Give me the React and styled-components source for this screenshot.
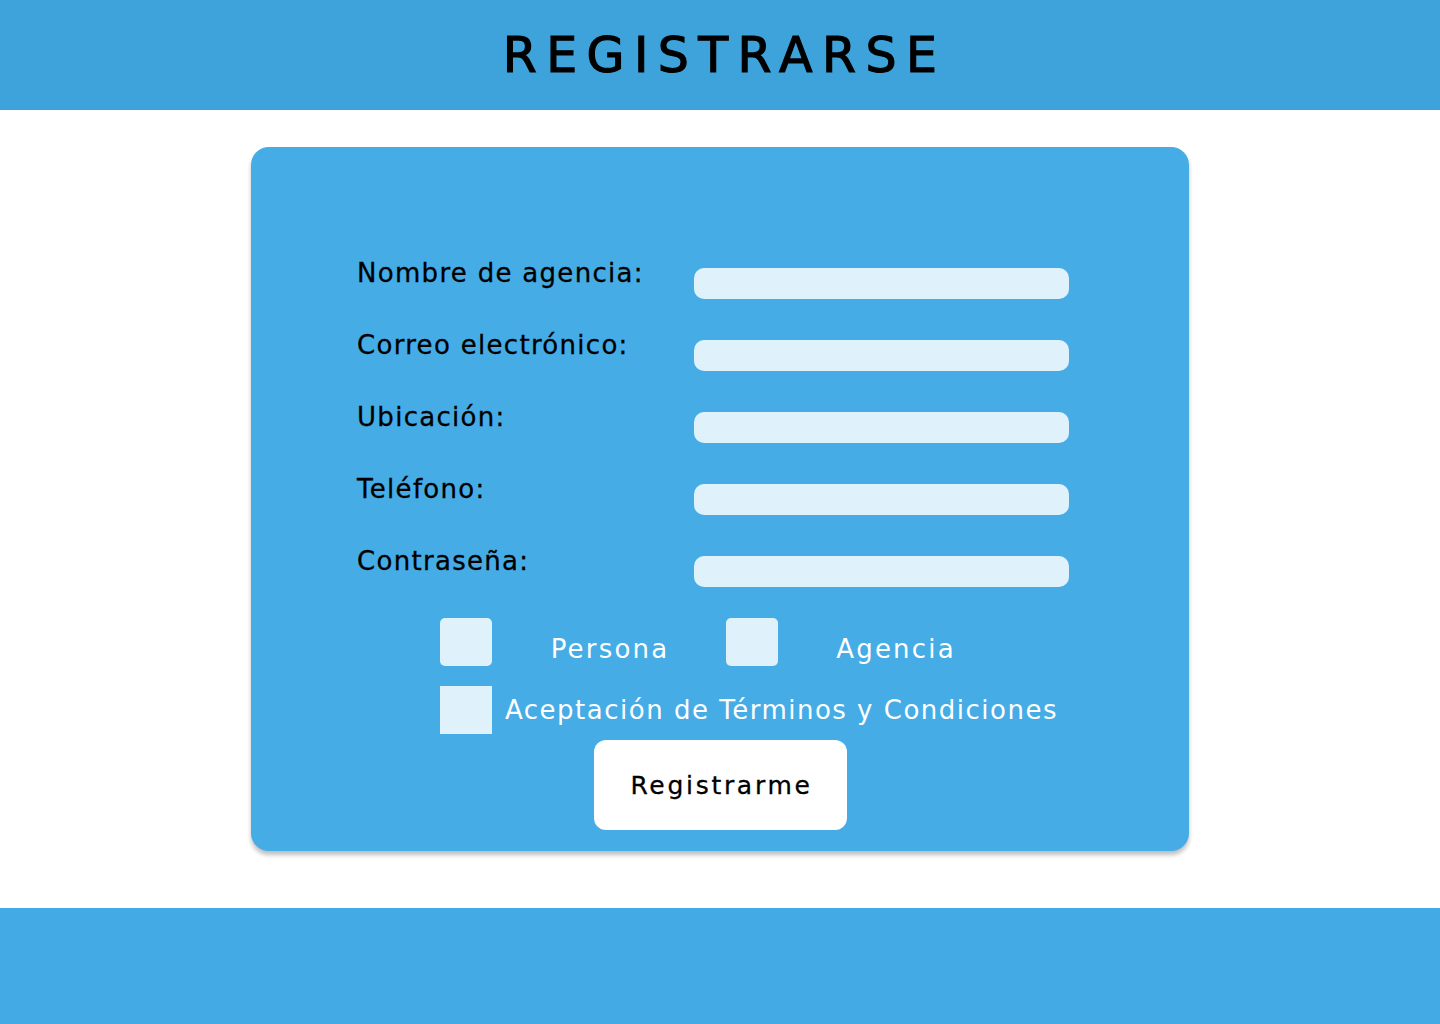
import React from "react";
import styled, { createGlobalStyle } from "styled-components";

const Global = createGlobalStyle`
  * { box-sizing: border-box; }
  body {
    margin: 0;
    background: #ffffff;
    font-family: "DejaVu Sans", "Liberation Sans", sans-serif;
  }
`;

const Page = styled.div`
  display: flex;
  flex-direction: column;
  min-height: 1024px;
`;

const Header = styled.header`
  height: 110px;
  background: #3ea3db;
  display: flex;
  align-items: center;
  justify-content: center;
`;

const Title = styled.h1`
  margin: 0;
  font-size: 49px;
  font-weight: normal;
  letter-spacing: 9.4px;
  padding-left: 9px;
  color: #000;
  -webkit-text-stroke: 1.2px #000;
`;

const Main = styled.main`
  display: flex;
  justify-content: center;
  padding: 37px 0 57px;
`;

const Card = styled.form`
  width: 938px;
  height: 704px;
  background: #45ace6;
  border-radius: 18px;
  box-shadow: 0 4px 4px rgba(0, 0, 0, 0.25);
  padding: 111px 0 21px 0;
  display: flex;
  flex-direction: column;
`;

const Fields = styled.div`
  display: flex;
  flex-direction: column;
  gap: 31px;
  margin-left: 106px;
`;

const FieldRow = styled.div`
  display: grid;
  grid-template-columns: 337px 375px;
  align-items: start;
`;

const Label = styled.label`
  font-size: 26px;
  line-height: 30px;
  letter-spacing: 1.3px;
  color: #000;
  -webkit-text-stroke: 0.3px #000;
`;

const Input = styled.input`
  margin-top: 10px;
  height: 31px;
  width: 375px;
  border: none;
  border-radius: 10px;
  background: #dff2fc;
  outline: none;
  padding: 0 10px;
`;

const Options = styled.div`
  display: grid;
  grid-template-columns: 52px 234px 52px 234px;
  height: 48px;
  margin: 31px 0 0 189px;
`;

const Box = styled.span`
  display: block;
  width: 52px;
  height: 48px;
  background: #dff2fc;
  border-radius: ${(p) => (p.$square ? "0" : "5px")};
`;

const OptionText = styled.span`
  display: flex;
  align-items: center;
  justify-content: center;
  padding-top: 14px;
  padding-left: 2px;
  font-size: 26px;
  letter-spacing: 2.2px;
  color: #ffffff;
`;

const Terms = styled.div`
  display: flex;
  align-items: center;
  gap: 13px;
  height: 48px;
  margin: 20px 0 0 189px;
`;

const TermsText = styled.span`
  font-size: 26px;
  letter-spacing: 1.5px;
  color: #ffffff;
`;

const Button = styled.button`
  align-self: center;
  margin-top: 6px;
  width: 253px;
  height: 90px;
  border: none;
  border-radius: 12px;
  background: #ffffff;
  font-family: inherit;
  font-size: 25px;
  letter-spacing: 2.7px;
  padding: 0 0 0 3px;
  color: #000;
  -webkit-text-stroke: 0.3px #000;
  cursor: pointer;
`;

const Footer = styled.footer`
  height: 116px;
  background: #44aae5;
`;

const fields = [
  "Nombre de agencia:",
  "Correo electrónico:",
  "Ubicación:",
  "Teléfono:",
  "Contraseña:",
];

export default function App() {
  return (
    <Page>
      <Global />
      <Header>
        <Title>REGISTRARSE</Title>
      </Header>
      <Main>
        <Card onSubmit={(e) => e.preventDefault()}>
          <Fields>
            {fields.map((f) => (
              <FieldRow key={f}>
                <Label>{f}</Label>
                <Input type={f === "Contraseña:" ? "password" : "text"} />
              </FieldRow>
            ))}
          </Fields>
          <Options>
            <Box />
            <OptionText>Persona</OptionText>
            <Box />
            <OptionText>Agencia</OptionText>
          </Options>
          <Terms>
            <Box $square />
            <TermsText>Aceptación de Términos y Condiciones</TermsText>
          </Terms>
          <Button type="submit">Registrarme</Button>
        </Card>
      </Main>
      <Footer />
    </Page>
  );
}
